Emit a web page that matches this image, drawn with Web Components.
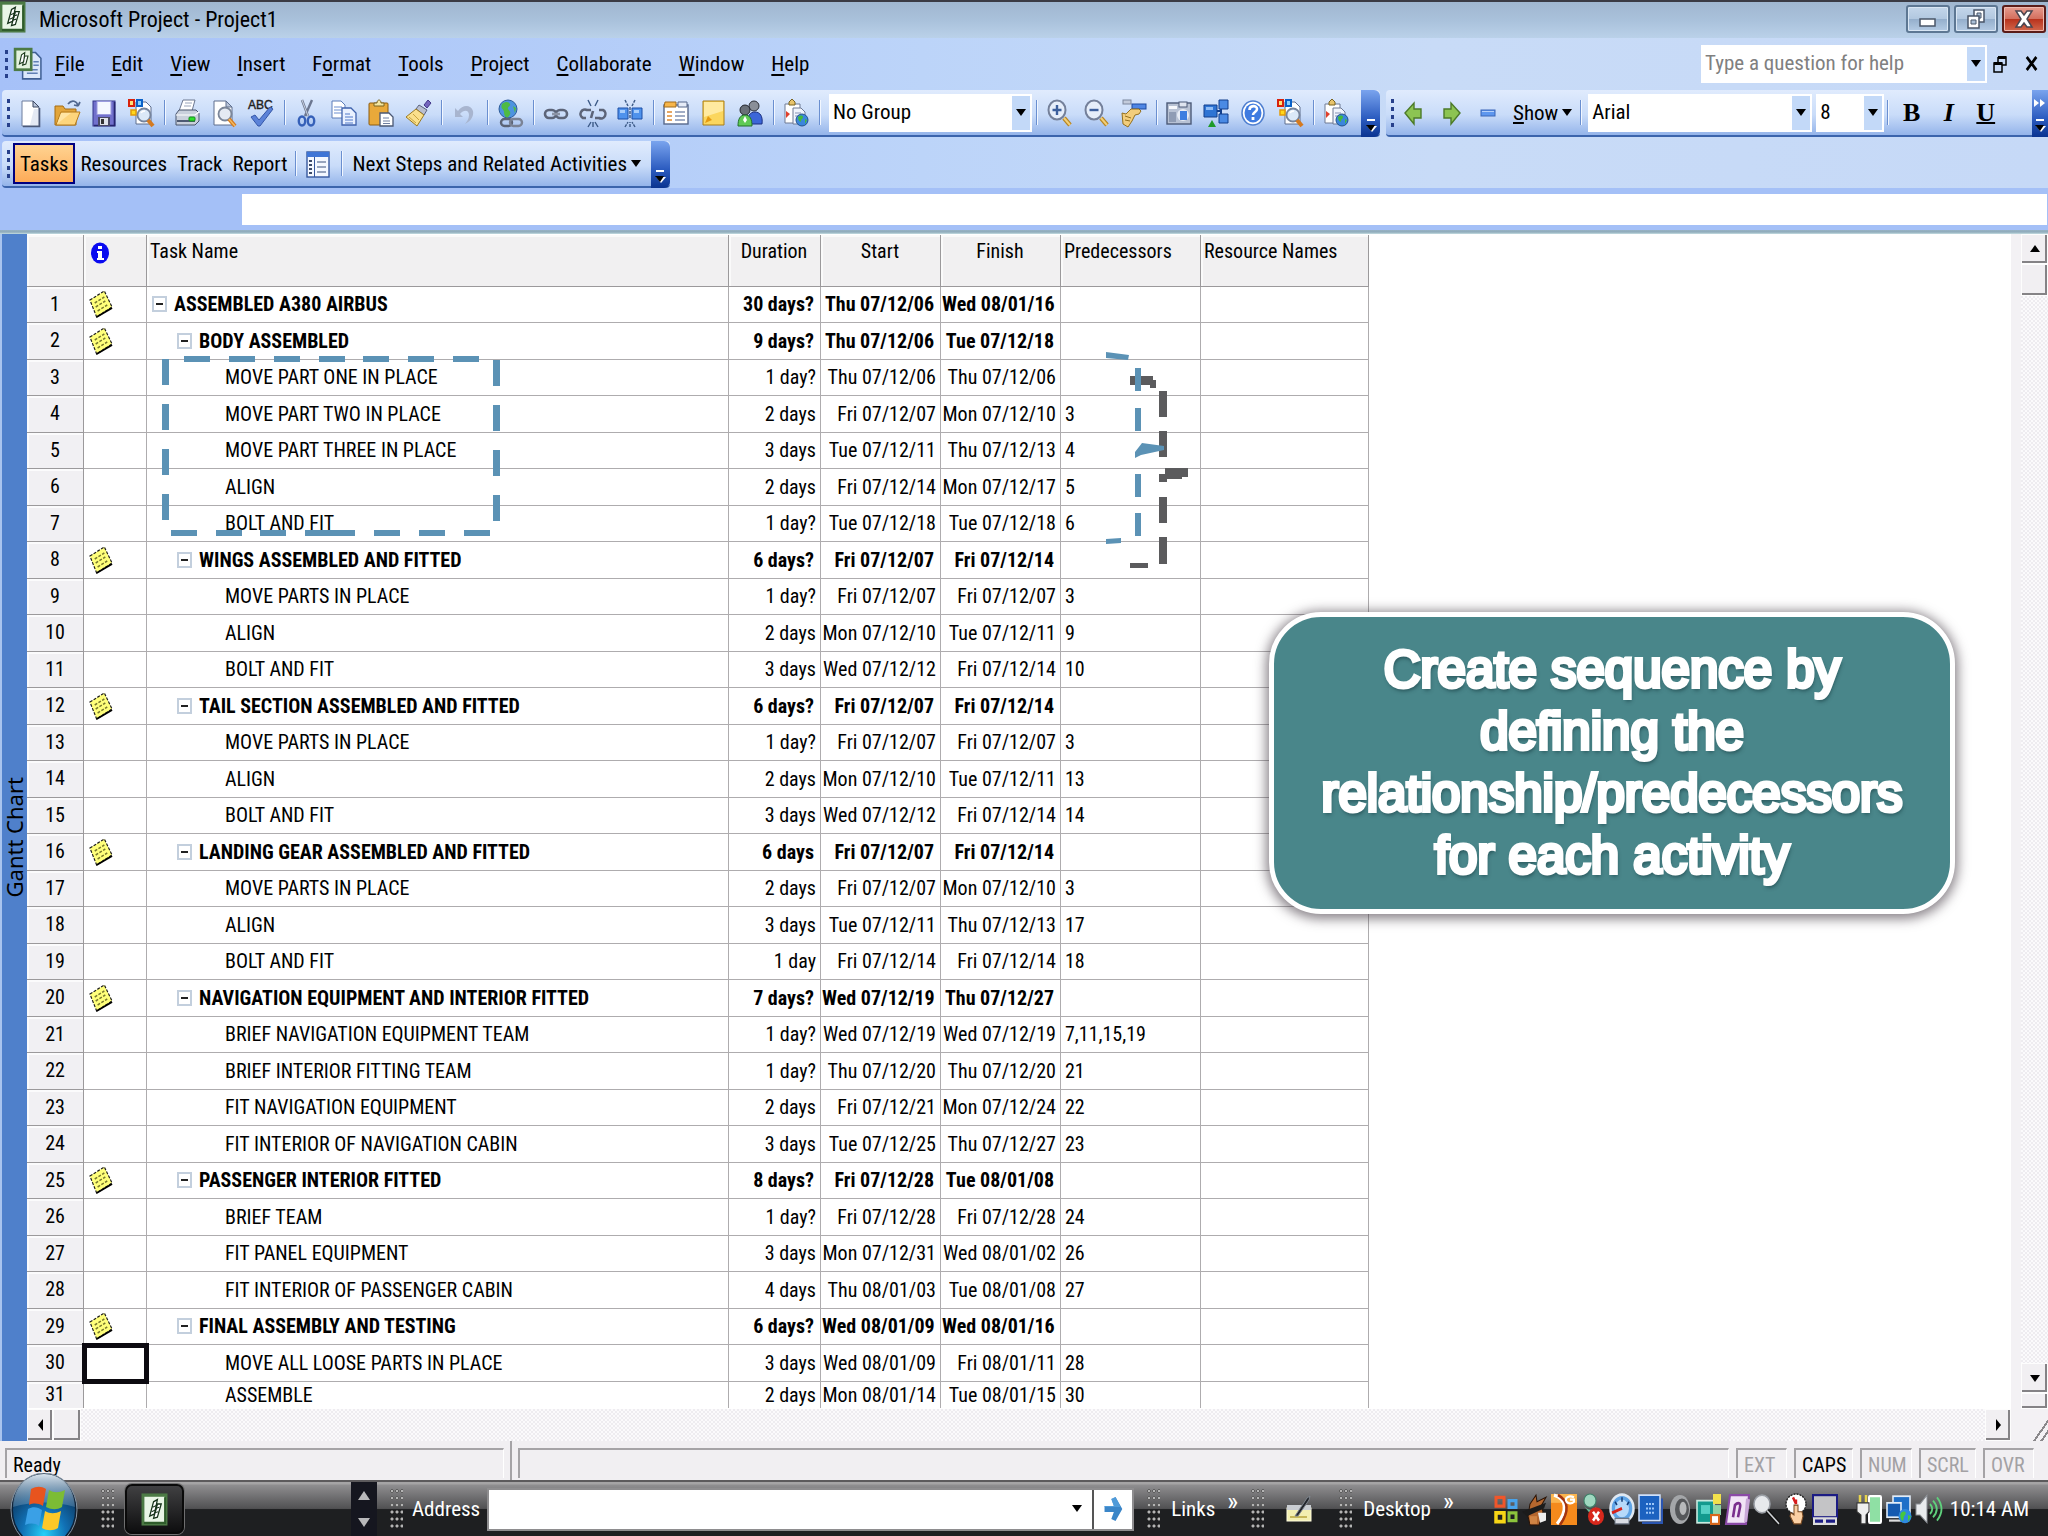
<!DOCTYPE html>
<html lang="en">
<head>
<meta charset="utf-8">
<title>Microsoft Project - Project1</title>
<style>
html,body{margin:0;height:100%}
body{font-family:"Roboto Condensed","Liberation Sans",sans-serif;font-size:21px;color:#000;overflow:hidden}
</style>
</head>
<body>
<project-window></project-window>
<script>
const ICONS = {
 app:`<rect x="1" y="1" width="24" height="26" fill="#e9f5e6" stroke="#4c7a45" stroke-width="3"/><path d="M2 26h22V3" fill="none" stroke="#2f5c2b" stroke-width="2"/><path d="M8 20l4-13 4-2-3 13zM12 22l4-13 4 0-4 12z" fill="#fff" stroke="#16321a" stroke-width="1.3"/><path d="M11 12l5-2M10 16l5-2M14 13l4-1M13 17l4-1" stroke="#16321a"/>`,
 doc:`<path d="M8 4h12l5 5v18H8z" fill="#dbe8fb" stroke="#3f5f94" stroke-width="1.4"/><path d="M12 19h10M12 22h10M18 12h5M18 15h5" stroke="#5f7fb5" stroke-width="1.3"/><rect x="1" y="1" width="15" height="18" fill="#e4f2df" stroke="#4c7a45" stroke-width="2.4"/><path d="M5 14l2-8 3-2-1 8zM8 15l2-8 3 0-2 7z" fill="#fff" stroke="#1c3a1c"/>`,
 new:`<path d="M5 2h11l6 6v19H5z" fill="#fff" stroke="#6c7c9c"/><path d="M16 2v6h6z" fill="#b9c5da" stroke="#3b4660"/><path d="M22.500 9v18.500H6" fill="none" stroke="#4a5878" stroke-width="1.6"/><path d="M17 10h4v16h-8z" fill="#d9e0ee" opacity=".7"/>`,
 open:`<path d="M1 26V7h8l2 3h11v16z" fill="#e2a53a" stroke="#a56d12"/><path d="M2 26L7 13h19l-5 13z" fill="#fdd57c" stroke="#b47a1c"/><path d="M3 25l4-11h10z" fill="#ffe9ac" opacity=".8"/><path d="M14 5c4-5 9-3 10 2m0 0l-4-1m4 1l2-4" fill="none" stroke="#50678f" stroke-width="1.7"/>`,
 save:`<rect x="2" y="2" width="22" height="25" fill="#7170cc" stroke="#34348a"/><path d="M23.500 3v23.500H3" fill="none" stroke="#26266f" stroke-width="1.600"/><rect x="6" y="2.500" width="14" height="13" fill="#f4f7ff" stroke="#9a9ade"/><rect x="7" y="18" width="12" height="9" fill="#4a4a66"/><rect x="9" y="19" width="8" height="7" fill="#dfe2ea"/><rect x="10" y="20" width="3" height="5" fill="#333"/>`,
 find:`<path d="M8 3h10l5 5v17H8z" fill="#fff" stroke="#5e6e8e"/><rect x="1" y="1" width="5" height="6" fill="#ffe27a" stroke="#d8220c" stroke-width="2"/><rect x="9" y="1" width="5" height="6" fill="#8ed0ff" stroke="#0b62c8" stroke-width="2"/><rect x="3" y="11" width="5" height="5" fill="#ffd81c" stroke="#e39b07" stroke-width="1.500"/><circle cx="16" cy="16" r="6.500" fill="#dbe9f8" stroke="#76849c" stroke-width="1.800"/><path d="M13 14c1-2 3-2 4-2" stroke="#fff" stroke-width="1.500" fill="none"/><path d="M20 21l5 6" stroke="#d47a20" stroke-width="4"/>`,
 print:`<path d="M9 1h12l-3 11H5z" fill="#fff" stroke="#6d7891"/><path d="M11 4h7M10 7h7" stroke="#9aa5bb"/><path d="M5 11h17l3 3v8l-4 4H2V15z" fill="#c9d0dc" stroke="#49546c"/><path d="M2 16h19l4-3" fill="none" stroke="#fff" stroke-width="1.200"/><path d="M3 22h18" stroke="#4e5a73" stroke-width="2"/><rect x="15" y="18" width="6" height="4" rx="1" fill="#2fe02c" stroke="#158a1c"/>`,
 preview:`<path d="M3 2h12l6 6v18H3z" fill="#fff" stroke="#5e6e8e"/><path d="M15 2v6h6z" fill="#b9c5da" stroke="#5e6e8e"/><circle cx="14" cy="15" r="6.500" fill="#e4eaf3" stroke="#7b8699" stroke-width="1.800"/><path d="M18 20l6 7" stroke="#d47a20" stroke-width="4"/><path d="M18 20l6 7" stroke="#f4bb62" stroke-width="1.400"/>`,
 abc:`<text x="0" y="10" font-family="Liberation Sans,sans-serif" font-size="12" fill="#222" stroke="#222" stroke-width=".4">ABC</text><path d="M3 18l4-2 4 5L22 8l3 2-13 17h-2z" fill="#5b82d8" stroke="#3557a8"/>`,
 cut:`<path d="M8 1l6 16M18 1l-7 16" stroke="#6c7790" stroke-width="2.400"/><path d="M8 1l6 16" stroke="#c8d0de"/><ellipse cx="8" cy="22" rx="3.200" ry="4.500" fill="none" stroke="#3560b8" stroke-width="2.400"/><ellipse cx="17" cy="22" rx="3.200" ry="4.500" fill="none" stroke="#3560b8" stroke-width="2.400"/>`,
 copy:`<path d="M1 2h9l4 4v13H1z" fill="#fff" stroke="#5c7cb8"/><path d="M3 8h8M3 11h8M3 14h8" stroke="#6d8fd0"/><path d="M11 9h9l5 5v12H11z" fill="#eaf1ff" stroke="#3f62ac" stroke-width="1.300"/><path d="M14 15h5M14 18h8M14 21h8M14 24h8" stroke="#5078c8"/>`,
 paste:`<rect x="1" y="4" width="19" height="22" rx="1" fill="#e9a93a" stroke="#8c5c10"/><path d="M6 7V4h3c0-4 4-4 4 0h3v3z" fill="#f4e6a2" stroke="#7a6420"/><path d="M12 14h9l4 4v9H12z" fill="#fff" stroke="#4b5874" stroke-width="1.300"/><path d="M15 19h6M15 22h7M15 24.500h7" stroke="#6f7fa0"/>`,
 brush:`<path d="M19 6l4-5 3 3-4 5z" fill="#7465bd" stroke="#44388a"/><path d="M14 6l8 5-3 5-8-6z" fill="#b9bfd0" stroke="#5c6480"/><path d="M11 10l8 6-7 11L1 18z" fill="#fae08c" stroke="#9c7a20"/><path d="M4 18l7 6M8 15l6 6" stroke="#c9a440"/>`,
 undo:`<path d="M4 9v9h8l-3-3c4-5 9-4 9 1 0 4-2 6-4 9 6-3 9-8 8-13C20 6 12 5 7 12z" fill="#a8b5cf"/>`,
 globelink:`<circle cx="11" cy="10" r="9" fill="#4d93e0" stroke="#2d5c9a"/><path d="M5 5c4-3 7-2 8 0s-3 3-2 5 4 3 1 7-5-1-5-4-4-3-2-8zM16 7l3 2-1 5z" fill="#4fbb43"/><rect x="4" y="20" width="11" height="7" rx="3.500" fill="none" stroke="#5b6375" stroke-width="2.400"/><rect x="13" y="20" width="12" height="7" rx="3.500" fill="none" stroke="#7b8395" stroke-width="2.400"/>`,
 link:`<rect x="2" y="11" width="11" height="8" rx="4" fill="none" stroke="#5c6478" stroke-width="2.600"/><rect x="13" y="11" width="11" height="8" rx="4" fill="none" stroke="#5c6478" stroke-width="2.600"/><path d="M9 15h8" stroke="#8c94a6" stroke-width="2.600"/>`,
 unlink:`<path d="M11 11H7a4 4 0 0 0-4 8h3M15 19h4a4 4 0 0 0 4-8h-4M11 19l2-7" fill="none" stroke="#5c6478" stroke-width="2.600"/><path d="M8 1l3 6M18 1l-3 6M8 28l3-5M13 28v-5M18 28l-3-5" stroke="#3c5a86" stroke-width="1.400"/>`,
 split:`<path d="M1 9h10v11H1zM15 9h10v11H15z" fill="#4f92ec" stroke="#1d4fa6"/><path d="M3 11h5v3H3zM17 11h5v3h-5z" fill="#a8cdfb"/><path d="M8 1l3 6M18 1l-3 6M8 28l3-5M13 28v-5M18 28l-3-5M13 8v12" stroke="#3c5a86" stroke-width="1.400" stroke-dasharray="3 1"/>`,
 info:`<rect x="1" y="6" width="24" height="19" fill="#fff" stroke="#57688c" stroke-width="1.400"/><path d="M1 8h12V3H2z" fill="#f7b549" stroke="#a06a1c"/><path d="M15 3h9v5h-9z" fill="#e6ecf8" stroke="#57688c"/><path d="M4 13h5M4 17h5M4 21h5" stroke="#e08a30" stroke-width="1.500"/><path d="M12 13h10M12 17h10M12 21h10" stroke="#8292b4" stroke-width="1.500"/>`,
 note:`<path d="M3 2h21v24H3z" fill="#fbd65e" stroke="#a87c16"/><path d="M4 3h19v9L4 18z" fill="#ffeaa0"/><path d="M5 24l3-7 4 4z" fill="#e59a10"/>`,
 people:`<circle cx="17" cy="7" r="5" fill="#8a8f98" stroke="#2d3038"/><path d="M11 25c-1-8 2-12 7-12s8 4 7 12z" fill="#3c66d8" stroke="#1b2f80"/><circle cx="8" cy="11" r="5" fill="#6a7078" stroke="#22252c"/><path d="M1 27c0-7 2-11 7-11s7 4 7 11z" fill="#5fca55" stroke="#22702a"/><path d="M8 17l-2 4 2 3 2-3z" fill="#fff"/>`,
 clip:`<path d="M2 5h15v19H2z" fill="#fff" stroke="#6e7a94"/><path d="M6 6V3l3-3 3 3v3z" fill="#e8c46c" stroke="#7a6420"/><path d="M3 12l4 3-4 4" fill="#e0402c"/><path d="M10 9h8l4 4v12H10z" fill="#f1f5fd" stroke="#6e7a94"/><path d="M12 14h6M12 17h6" stroke="#8593b3"/><circle cx="19" cy="21" r="6" fill="#3b86dc" stroke="#23538e"/><path d="M15 18c2-2 5-2 5 0s-2 2-2 4-3 0-3-4zM22 20l2 1-2 4z" fill="#44b93c"/>`,
 zoomin:`<ellipse cx="11" cy="11" rx="8.500" ry="9.500" fill="#e6eefa" stroke="#74809a" stroke-width="2"/><path d="M11 6v10M6.500 11h9" stroke="#3c5f9c" stroke-width="2.400"/><path d="M18 19l6 7" stroke="#b98520" stroke-width="4.500"/><path d="M18 19l6 7" stroke="#f1cf78" stroke-width="2"/>`,
 zoomout:`<ellipse cx="11" cy="11" rx="8.500" ry="9.500" fill="#e6eefa" stroke="#74809a" stroke-width="2"/><path d="M6.500 11h9" stroke="#3c5f9c" stroke-width="2.400"/><path d="M18 19l6 7" stroke="#b98520" stroke-width="4.500"/><path d="M18 19l6 7" stroke="#f1cf78" stroke-width="2"/>`,
 goto:`<rect x="3" y="1" width="8" height="4" fill="#c3cbdb" stroke="#7c879e"/><rect x="12" y="5" width="14" height="5" fill="#4f86e4" stroke="#1f4aa0"/><path d="M2 14l4 1 5-5 8 0 2 2-2 3-4 1-3 6-4 6-5-3z" fill="#f2cd7c" stroke="#94701e"/><path d="M5 17l6 2M5 21l5 1" stroke="#94701e"/>`,
 camera:`<rect x="1" y="4" width="24" height="21" fill="#b8c2d4" stroke="#4c5a78" stroke-width="1.400"/><path d="M3 7h8v3H3z" fill="#f6f8fc"/><rect x="13" y="3" width="8" height="5" fill="#dfe5f0" stroke="#4c5a78"/><circle cx="17" cy="16" r="6" fill="#e7ecf5"/><rect x="14" y="12" width="7" height="9" fill="#3d7ee0"/><path d="M3 13h7v10H3z" fill="#8f9cb4"/>`,
 net:`<path d="M1 6h13v12H1z" fill="#2e74d4" stroke="#123f8c"/><path d="M14 12h4M18 6v15" stroke="#123f8c" stroke-width="2"/><path d="M16 1h9v9h-9zM16 15h9v9h-9z" fill="#4a8ae4" stroke="#123f8c"/><path d="M3 8h7v3H3z" fill="#8fbcf6"/><path d="M5 28l4-7 4 7z" fill="#1f9a28"/>`,
 help:`<ellipse cx="13" cy="14" rx="11" ry="12" fill="#fff" stroke="#4f7fd0" stroke-width="1.500"/><ellipse cx="13" cy="14" rx="8.500" ry="9.500" fill="#3f7be0"/><path d="M9.500 11c0-5 7.500-5 7.500-1 0 3-4 3-4 6" fill="none" stroke="#fff" stroke-width="2.600"/><rect x="11.600" y="18" width="2.800" height="3" fill="#fff"/>`,
 left:`<path d="M4 14L13 4v6h7v9h-7v6z" fill="#8cc452" stroke="#4c7a28" stroke-width="1.400"/>`,
 right:`<path d="M22 14L13 4v6H6v9h7v6z" fill="#8cc452" stroke="#4c7a28" stroke-width="1.400"/>`,
 minus:`<rect x="6" y="11" width="14" height="6" fill="#5e97ee" stroke="#3a66b8"/><path d="M7 12.500h12" stroke="#b4d0fa"/>`,
 guide:`<rect x="2" y="2" width="22" height="25" fill="#f4f8ff" stroke="#36589e" stroke-width="1.400"/><rect x="2" y="2" width="22" height="5" fill="#3f75d6"/><path d="M9.500 7v20" stroke="#36589e"/><path d="M4 11h3M4 15h3M4 19h3M4 23h3" stroke="#3c4a68" stroke-width="2"/><path d="M12 12h9M12 17h9M12 22h9" stroke="#7888a8" stroke-width="1.600"/>`,
 sticky:`<path d="M2 10L17 1l8 16L9 27z" fill="#ffff7a" stroke="#1a1a1a" stroke-width="1.200" stroke-dasharray="3 1.500"/><path d="M9 27l16-9" stroke="#000" stroke-width="2"/><path d="M7 13l10-6M8 17l10-6M10 21l10-6" stroke="#77772c" stroke-width="1.500" stroke-dasharray="3 1.500"/>`,
 ind:`<ellipse cx="13" cy="14" rx="9" ry="10.500" fill="#0a0af0"/><path d="M11 7h4v3h-4zM10 12h5v7h2v2h-7v-2h1v-5h-1z" fill="#fff"/>`,
 office:`<path d="M3 3h8v8H3z" fill="none" stroke="#f0562a" stroke-width="3"/><path d="M16 6h7v6h-7z" fill="none" stroke="#4aa3ea" stroke-width="3"/><path d="M3 17h8v8H3z" fill="none" stroke="#f7d516" stroke-width="3.500"/><path d="M16 17h7v7h-7z" fill="none" stroke="#8cc43c" stroke-width="3"/>`,
 fox:`<path d="M8 9l6-8 1 6 9-4-5 8 2 5-4 12H8l-2-8z" fill="#b5672e" stroke="#2a1408"/><path d="M0 16l24-8-2 5-17 7z" fill="#1b1b1b"/><path d="M16 17h8v7l-6 2z" fill="#eee"/><path d="M8 20h7v7H8z" fill="#d08444"/>`,
 orange:`<rect x="0" y="0" width="26" height="28" fill="#f58a1c"/><path d="M0 0h26v8H0z" fill="#fbb44e"/><path d="M3 1c12 3 14 14 3 26" fill="none" stroke="#fff" stroke-width="3"/><path d="M7 1c10 5 12 14 2 27" fill="none" stroke="#a33410" stroke-width="2.500"/><path d="M23 3c-5-2-9 0-8 3s6 3 8 1V5h-4" fill="none" stroke="#fff" stroke-width="2"/>`,
 person:`<circle cx="10" cy="6" r="6" fill="#9fd8c0" stroke="#3c8068"/><path d="M3 10c5 6 10 4 13 2l-2 10z" fill="#6ab898"/><circle cx="16" cy="20" r="8" fill="#d8281c"/><path d="M13 16l6 8M19 16l-6 8" stroke="#fff" stroke-width="2.500"/>`,
 gauge:`<ellipse cx="13" cy="13" rx="11.500" ry="12.500" fill="#5fa4e6" stroke="#dfe8f2" stroke-width="2.500"/><ellipse cx="13" cy="13" rx="7" ry="8" fill="#b6dafa"/><path d="M3 17l10-4" stroke="#d8231a" stroke-width="2.600"/><path d="M6 22h14v5H6z" fill="#d9dde4" stroke="#6c7684"/><path d="M13 3v4M6 7l2 3M20 7l-2 3" stroke="#123c78" stroke-width="1.500"/>`,
 chip:`<path d="M1 1h21v23H1z" fill="#1c62c0" stroke="#cfe0fa" stroke-width="1.500"/><path d="M23 4h2v23H4v-2h19z" fill="#2a55b0"/><path d="M8 9h8M8 13h8M8 17h8" stroke="#9cc6f8" stroke-width="1.800" stroke-dasharray="2 1"/>`,
 horn:`<ellipse cx="13" cy="14" rx="10" ry="13" fill="#a4a6a9"/><ellipse cx="15" cy="14" rx="7" ry="10" fill="#55575a"/><ellipse cx="16" cy="13" rx="3.500" ry="6" fill="#b7b9bb"/>`,
 shots:`<rect x="1" y="6" width="17" height="20" fill="#139a8e" stroke="#c9eae0" stroke-width="1.600"/><path d="M5 10h9v8H5z" fill="#54d0c4"/><rect x="17" y="0" width="8" height="9" fill="#f2e14c"/><rect x="17" y="10" width="8" height="9" fill="#8fd4a8"/><rect x="15" y="19" width="8" height="8" fill="#fff" stroke="#d8681c" stroke-width="2"/>`,
 onenote:`<path d="M5 1h19l-3 26H1z" fill="#f1e4f6" stroke="#8a4aa6" stroke-width="2"/><path d="M8 21l2-11c3-3 6-2 5 2l-2 9" fill="none" stroke="#7a2f8e" stroke-width="2.600"/><path d="M21 4l4 1-3 20-3 1z" fill="#c9a8d8"/>`,
 mag:`<ellipse cx="8" cy="9" rx="8" ry="8" fill="#e7e9ec" stroke="#9b9fa6" stroke-width="1.500"/><path d="M13 15l12 12" stroke="#111" stroke-width="4"/><path d="M13 15l12 12" stroke="#cfd2d6" stroke-width="1.400"/>`,
 clock:`<ellipse cx="13" cy="9" rx="10" ry="9" fill="#fff" stroke="#222" stroke-width="1.300" stroke-dasharray="2 1"/><path d="M13 9L10 3M13 9V5" stroke="#d81c1c" stroke-width="2.400"/><path d="M11 10h4v6h4l1 4-2 7h-7l-4-7 1-3 3 2z" fill="#fbd0a4" stroke="#7a4a22"/>`,
 panel:`<rect x="1" y="1" width="24" height="20" fill="#c4c4c6" stroke="#1c1c84" stroke-width="2"/><path d="M1 21h24v7H1z" fill="#dcdcdc"/><path d="M3 23h8v3H3zM14 23h9v3h-9z" fill="#1c1c84"/>`,
 plug:`<rect x="12" y="2" width="12" height="24" rx="1" fill="#8fe0a4" stroke="#fff" stroke-width="2"/><path d="M3 1v7M9 1v7" stroke="#e8d44c" stroke-width="2.500"/><path d="M0 8h12v8l-3 3v8H4v-8l-4-3z" fill="#eee" stroke="#333"/>`,
 lan:`<rect x="7" y="2" width="17" height="15" fill="#1f6fc8" stroke="#e2ecf8" stroke-width="1.600"/><rect x="1" y="8" width="14" height="13" fill="#155ab0" stroke="#e2ecf8" stroke-width="1.600"/><path d="M3 24h12" stroke="#ddd" stroke-width="2"/><circle cx="19" cy="20" r="6.500" fill="#2e8ae0"/><path d="M15 17c4-3 6 0 4 2s-1 4-2 5-4-3-2-7zM22 19l3 1-3 5z" fill="#46c83e"/>`,
 sound:`<path d="M1 9h4l7-8v25l-7-7H1z" fill="#e9ebee" stroke="#8a8e94"/><path d="M15 9c3 3 3 6 0 9M18 6c5 5 5 10 0 15M22 3c6 7 6 14 0 21" fill="none" stroke="#5fd07c" stroke-width="1.800"/>`,
 pen:`<rect x="1" y="13" width="24" height="13" fill="#f3efb0" stroke="#fffde0"/><rect x="1" y="10" width="24" height="5" fill="#c9cdd2"/><path d="M4 22h17" stroke="#b9a63c" stroke-width="1.500"/><path d="M9 21L21 3l3-2-1 4L12 21z" fill="#23262b" stroke="#7f868f"/>`,
 go:`<path d="M3 11h11L11 4l5-2 8 12-8 12-5-2 3-7H3z" fill="#3b86c8"/><path d="M3 11h11L11 4l5-2 6 10H3z" fill="#5aa4e0" opacity=".7"/>`
};
class Base extends HTMLElement{
  connectedCallback(){ if(!this.shadowRoot){ this.attachShadow({mode:'open'}).innerHTML=this.view(); } }
}
const define=(n,c)=>customElements.define(n,c);
const DOWN='<svg width="10" height="8" viewBox="0 0 10 8"><path d="M0 0h10L5 7z" fill="currentColor"/></svg>';

define('app-icon',class extends Base{view(){
  return `<style>:host{display:inline-block;width:26px;height:28px}svg{display:block;width:100%;height:100%;overflow:visible}</style><svg viewBox="0 0 26 28" preserveAspectRatio="none" aria-hidden="true">${ICONS[this.getAttribute('name')]}</svg>`}});

define('tool-button',class extends Base{view(){
  const icon=this.getAttribute('icon');
  return `<style>:host{display:flex;flex:none}button{all:unset;display:flex;align-items:center;justify-content:center;gap:4px;box-sizing:border-box;height:100%;min-width:37px;line-height:28px;white-space:nowrap}
  :host([text]) button{min-width:0;padding:0 5px}
  :host([pressed]) button{background:linear-gradient(#ffd391,#fdab58);border:2px solid #000080}
  ::slotted(u){text-decoration-thickness:2px}</style>
  <button type="button" aria-label="${this.getAttribute('label')||this.textContent.trim()}">${icon?`<app-icon name="${icon}"></app-icon>`:''}<span><slot></slot></span>${this.hasAttribute('menu')?DOWN:''}</button>`}});

define('tool-separator',class extends Base{view(){
  return `<style>:host{flex:none;display:block;width:1px;margin:10px 4px 10px 3px;background:#6a8fd0;border-right:1px solid #f2f7ff}</style>`}});

define('drag-grip',class extends Base{view(){
  return `<style>:host{flex:none;display:block;width:3px;height:28px;margin:0 3px;align-self:center;background:repeating-linear-gradient(#27408b 0 4px,transparent 4px 8px)}</style>`}});

define('combo-box',class extends Base{view(){
  const ph=this.getAttribute('placeholder'),l=this.getAttribute('label');
  const f=ph?`<input type="text" aria-label="${l}" placeholder="${ph}">`:`<select aria-label="${l}"><option>${this.getAttribute('value')}</option></select>`;
  return `<style>:host{display:flex;flex:none;align-self:center;box-sizing:border-box;height:38px;background:#fff;border:2px solid #fff}
  input,select{appearance:none;border:0;outline:0;background:none;flex:1;min-width:0;padding:0 2px;margin:0 0 2px;font:inherit;color:#000}
  input::placeholder{color:#808080;opacity:1}
  span{flex:none;display:flex;align-items:center;justify-content:center;width:18px;background:#c3d9f8}</style>${f}<span>${DOWN}</span>`}});

define('tool-bar',class extends Base{view(){
  return `<style>:host{display:flex;box-sizing:border-box;height:47px;border-bottom:2px solid #3b64ac;border-radius:4px;background:linear-gradient(#e0ebfd,#c9dcf9 55%,#94b4ea);padding-left:2px}
  .cap{flex:none;width:19px;margin-left:5px;margin-bottom:-2px;border-radius:0 6px 6px 0;background:linear-gradient(#7aa4ee,#2c5cc0 60%,#0a3390);display:flex;flex-direction:column;align-items:center;justify-content:flex-end;gap:12px;padding-bottom:4px;box-sizing:border-box}
  :host([grow]){flex:1}:host([grow]) .cap{margin-left:auto;border-radius:0;width:16px}</style>
  <drag-grip></drag-grip><slot></slot>
  <div class="cap">${this.hasAttribute('grow')?'<svg width="12" height="8" viewBox="0 0 12 8"><path d="M0 0l5 4-5 4zM6 0l5 4-5 4z" fill="#fff"/></svg>':''}<svg width="14" height="14" viewBox="0 0 14 14"><path d="M3 1h8" stroke="#fff" stroke-width="2"/><path d="M3 7h10l-5 6z" fill="#fff"/><path d="M2 6h9L7 12z" fill="#000"/></svg></div>`}});

define('title-bar',class extends Base{view(){
  return `<style>:host{display:flex;align-items:center;height:36px;border-top:2px solid #3b3b44;background:linear-gradient(#a0b7d0,#a9c1db 50%,#bad1e9)}
  app-icon{width:25px;height:30px;margin-bottom:6px}h1{margin:0 auto 0 14px;font-size:22px;font-weight:400;line-height:30px}
  button{all:unset;box-sizing:border-box;width:44px;height:28px;margin-left:4px;border:2px solid #5d7793;border-radius:3px;display:flex;align-items:center;justify-content:center;background:linear-gradient(#c4d6ea,#b2c8e0 48%,#94aecb 50%,#b4cbe4);box-shadow:inset 0 0 0 1px #d9e6f4;margin-bottom:2px}
  .x{background:linear-gradient(#e79c8f,#d4705f 48%,#b8321c 50%,#d2674c);border-color:#5a1c18;box-shadow:inset 0 0 0 1px #f0b9ae;margin-right:2px}</style>
  <app-icon name="app"></app-icon><h1>Microsoft Project - Project1</h1>
  <button type="button" aria-label="Minimize"><svg width="18" height="20"><rect x="1" y="10" width="15" height="7" fill="#fff" stroke="#4a5668" stroke-width="1.500"/></svg></button>
  <button type="button" aria-label="Restore"><svg width="20" height="22"><path d="M8 2h10v12H8z" fill="#fff" stroke="#4a5668" stroke-width="1.500"/><path d="M11 5h4v5h-4z" fill="#a9bfd6" stroke="#4a5668"/><path d="M2 8h11v12H2z" fill="#fff" stroke="#4a5668" stroke-width="1.500"/><path d="M5 12h5v4H5z" fill="#a9bfd6" stroke="#4a5668"/></svg></button>
  <button type="button" class="x" aria-label="Close"><svg width="20" height="20"><path d="M2 2h5l3 4 3-4h5l-5 8 5 8h-5l-3-4-3 4H2l5-8z" fill="#fff" stroke="#4c4650" stroke-width="1.500"/></svg></button>`}});

define('menu-bar',class extends Base{view(){
  const items=['|File','|Edit','|View','|Insert','F|ormat','|Tools','|Project','|Collaborate','|Window','|Help'];
  return `<style>:host{display:flex;align-items:center;height:52px;padding-left:2px}
  nav{display:flex;gap:1px;margin-right:auto}button{all:unset;padding:0 13px;line-height:32px}u{text-decoration-thickness:2px;text-underline-offset:3px}
  app-icon{width:28px;height:32px;margin-left:3px}combo-box{width:286px}.w{padding:0 8px 0 6px;display:flex}.w:last-child{padding:0 9px 0 10px}</style>
  <drag-grip></drag-grip><app-icon name="doc"></app-icon>
  <nav>${items.map(i=>{const p=i.indexOf('|');return `<button type="button">${i.slice(0,p)}<u>${i[p+1]}</u>${i.slice(p+2)}</button>`}).join('')}</nav>
  <combo-box label="Help search" placeholder="Type a question for help"></combo-box>
  <button type="button" class="w" aria-label="Restore document"><svg width="14" height="18" viewBox="0 0 14 18"><path d="M5 2h8v8H9M5 2v5M1 8h8v9H1z" fill="none" stroke="#000" stroke-width="1.500"/><path d="M5 2.500h8M1 8.500h8" stroke="#000" stroke-width="3"/></svg></button>
  <button type="button" class="w" aria-label="Close document"><svg width="14" height="16" viewBox="0 0 16 16" preserveAspectRatio="none"><path d="M2 1l11 13M13 1L2 14" stroke="#000" stroke-width="3"/></svg></button>`}});

const ROWS=[
[0,'ASSEMBLED A380 AIRBUS','30 days?','Thu 07/12/06','Wed 08/01/16',''],
[1,'BODY ASSEMBLED','9 days?','Thu 07/12/06','Tue 07/12/18',''],
[2,'MOVE PART ONE IN PLACE','1 day?','Thu 07/12/06','Thu 07/12/06',''],
[2,'MOVE PART TWO IN PLACE','2 days','Fri 07/12/07','Mon 07/12/10','3'],
[2,'MOVE PART THREE IN PLACE','3 days','Tue 07/12/11','Thu 07/12/13','4'],
[2,'ALIGN','2 days','Fri 07/12/14','Mon 07/12/17','5'],
[2,'BOLT AND FIT','1 day?','Tue 07/12/18','Tue 07/12/18','6'],
[1,'WINGS ASSEMBLED AND FITTED','6 days?','Fri 07/12/07','Fri 07/12/14',''],
[2,'MOVE PARTS IN PLACE','1 day?','Fri 07/12/07','Fri 07/12/07','3'],
[2,'ALIGN','2 days','Mon 07/12/10','Tue 07/12/11','9'],
[2,'BOLT AND FIT','3 days','Wed 07/12/12','Fri 07/12/14','10'],
[1,'TAIL SECTION ASSEMBLED AND FITTED','6 days?','Fri 07/12/07','Fri 07/12/14',''],
[2,'MOVE PARTS IN PLACE','1 day?','Fri 07/12/07','Fri 07/12/07','3'],
[2,'ALIGN','2 days','Mon 07/12/10','Tue 07/12/11','13'],
[2,'BOLT AND FIT','3 days','Wed 07/12/12','Fri 07/12/14','14'],
[1,'LANDING GEAR ASSEMBLED AND FITTED','6 days','Fri 07/12/07','Fri 07/12/14',''],
[2,'MOVE PARTS IN PLACE','2 days','Fri 07/12/07','Mon 07/12/10','3'],
[2,'ALIGN','3 days','Tue 07/12/11','Thu 07/12/13','17'],
[2,'BOLT AND FIT','1 day','Fri 07/12/14','Fri 07/12/14','18'],
[1,'NAVIGATION EQUIPMENT AND INTERIOR FITTED','7 days?','Wed 07/12/19','Thu 07/12/27',''],
[2,'BRIEF NAVIGATION EQUIPMENT TEAM','1 day?','Wed 07/12/19','Wed 07/12/19','7,11,15,19'],
[2,'BRIEF INTERIOR FITTING TEAM','1 day?','Thu 07/12/20','Thu 07/12/20','21'],
[2,'FIT NAVIGATION EQUIPMENT','2 days','Fri 07/12/21','Mon 07/12/24','22'],
[2,'FIT INTERIOR OF NAVIGATION CABIN','3 days','Tue 07/12/25','Thu 07/12/27','23'],
[1,'PASSENGER INTERIOR FITTED','8 days?','Fri 07/12/28','Tue 08/01/08',''],
[2,'BRIEF TEAM','1 day?','Fri 07/12/28','Fri 07/12/28','24'],
[2,'FIT PANEL EQUIPMENT','3 days','Mon 07/12/31','Wed 08/01/02','26'],
[2,'FIT INTERIOR OF PASSENGER CABIN','4 days','Thu 08/01/03','Tue 08/01/08','27'],
[1,'FINAL ASSEMBLY AND TESTING','6 days?','Wed 08/01/09','Wed 08/01/16',''],
[2,'MOVE ALL LOOSE PARTS IN PLACE','3 days','Wed 08/01/09','Fri 08/01/11','28'],
[2,'ASSEMBLE','2 days','Mon 08/01/14','Tue 08/01/15','30']];

define('task-table',class extends Base{view(){
  const cols=[57,63,582,92,120,120,140,168];
  return `<style>:host{display:block}
  table{width:1342px;table-layout:fixed;border-collapse:separate;border-spacing:0;font-size:20px;line-height:24px}
  th,td{box-sizing:border-box;padding:0 4px;border:solid #aeacae;border-width:0 1px 1px 0;white-space:nowrap;overflow:hidden;text-align:left;vertical-align:middle}
  thead th{height:52px;vertical-align:top;padding-top:4px;padding-left:3px;font-weight:400;background:#f1f0f1;border-color:#9b999b;box-shadow:inset 2px 2px #fafafa}
  thead th.c{text-align:center}
  tbody tr{height:37px}tbody tr:nth-child(odd){height:36px}
  tbody th{font-weight:400;text-align:center;background:#f1f0f3;border-color:#9b999b;box-shadow:inset 2px 2px #fbfbfc;padding-bottom:2px}
  td{padding-bottom:1px}
  td.r{text-align:right;padding:0 4px 1px 1px}tr.s td{font-weight:700}tr.s td.r{padding-right:6px}
  td app-icon{display:block;width:25px}
  .n0{padding-left:5px}.n1{padding-left:30px}.n2{padding-left:78px}
  .n{display:flex;align-items:center;gap:7px}
  button{all:unset;box-sizing:border-box;width:15px;height:16px;border:2px solid #c3cfdd;background:#fff linear-gradient(#222,#222) center/7px 2px no-repeat}
  .sel{outline:5px solid #0c0a10;outline-offset:-3px;overflow:visible;position:relative}
  tbody tr:last-child{height:26px}tbody tr:last-child>*{border-bottom:0}</style>
  <table><colgroup>${cols.map(w=>`<col style="width:${w}px">`).join('')}</colgroup>
  <thead><tr><th></th><th class="i"><app-icon name="ind"></app-icon></th><th>Task Name</th><th class="c">Duration</th><th class="c">Start</th><th class="c">Finish</th><th>Predecessors</th><th>Resource Names</th></tr></thead>
  <tbody>${ROWS.map((r,i)=>`<tr class="${r[0]<2?'s':''}"><th scope="row">${i+1}</th><td class="${i==29?'sel':''}">${r[0]<2?'<app-icon name="sticky"></app-icon>':''}</td><td class="n${r[0]}"><div class="n">${r[0]<2?'<button type="button" aria-label="Collapse"></button>':''}<span>${r[1]}</span></div></td><td class="r">${r[2]}</td><td class="r">${r[3]}</td><td class="r">${r[4]}</td><td>${r[5]}</td><td></td></tr>`).join('')}</tbody></table>`}});

define('scroll-bar',class extends Base{view(){
  const v=this.hasAttribute('vertical');
  const b=(p,l)=>`<button type="button" aria-label="${l}"><svg width="12" height="12" viewBox="0 0 12 12"><path d="${p}" fill="#000"/></svg></button>`;
  return `<style>:host{display:flex;background:repeating-conic-gradient(#eeecf0 0 25%,#fbfafc 0 50%) 0 0/4px 4px}
  :host([vertical]){flex-direction:column;width:27px}:host(:not([vertical])){height:32px}
  button,i{all:unset;flex:none;box-sizing:border-box;display:flex;align-items:center;justify-content:center;background:#f1eff2;border:solid #fdfdfd;border-width:1px;box-shadow:inset -2px -2px #858386}
  button{width:26px;height:32px}i{width:28px;height:32px}
  :host([vertical]) button{width:27px;height:30px}:host([vertical]) i{width:27px;height:32px}
  .g{flex:1}:host([vertical]) i.last{height:16px}</style>
  ${v?b('M6 2l5 7H1z','Scroll up'):b('M9 0v12L4 6z','Scroll left')}<i></i><div class="g"></div>${v?b('M1 3h10L6 10z','Scroll down')+'<i class="last"></i>':b('M4 0v12l5-6z','Scroll right')}`}});

define('call-out',class extends Base{view(){
  return `<style>:host{position:absolute;left:1269px;top:378px;box-sizing:border-box;width:686px;height:302px;padding:22px 0;border:5px solid #fff;border-radius:52px;background:#49868a;box-shadow:0 2px 12px 3px rgba(60,50,60,.6);text-align:center;color:#fff;font:51px/62px "Liberation Sans",sans-serif;-webkit-text-stroke:4px #fff;text-shadow:1px 3px 4px rgba(10,40,45,.7)}p{margin:0}</style><p><slot></slot></p>`}});

define('sketch-marks',class extends Base{view(){
  const r=(x,y,w,h)=>`M${x} ${y}h${w}v${h}h${-w}z`;let b='',g='';
  for(const y of [359,404,449,494])b+=r(162,y,7,26)+r(493,y+1,7,26);
  for(const x of [184,229,274,319,363,408,453])b+=r(x,356,26,6);
  for(const x of [171,216,260,374,419,464])b+=r(x,530,26,6);
  b+=r(305,530,50,6);
  for(const [y,h] of [[408,23],[474,23],[513,23]])b+=r(1135,y,6,h);
  for(const [y,h] of [[391,26],[431,26],[497,26],[537,27]])g+=r(1159,y,8,h);
  return `<style>:host{position:absolute;inset:0;pointer-events:none}svg{display:block;width:1300px;height:600px;margin-top:-234px}</style>
  <svg viewBox="0 0 1300 600" aria-hidden="true"><path fill="#5b5b5d" d="${g}M1130 376h23v4h3v8h-6v-3h-20zM1165 468h23v9h-6v2h-15v3h-8v-8h6zM1130 563h18v5h-18z"/><path fill="#5b92b5" d="${b}M1135 368h6v23h-6zM1106 352l23 3-1 5-22-2zM1135 452l7-9 22 3v4l-23 5-6 3zM1106 539l15-1v5l-15 1z"/></svg>`}});

define('task-sheet',class extends Base{view(){
  return `<style>:host{display:flex;flex:1;min-height:0;position:relative;background:#f3f1f4}
  aside{flex:none;width:27px;box-sizing:border-box;border-left:2px solid #a9c4ee;background:#4f80cb;display:flex;align-items:center;justify-content:center}
  aside span{writing-mode:vertical-rl;transform:rotate(180deg);font:22px/25px "Noto Sans",sans-serif}
  .main{flex:1;min-width:0;display:flex;flex-direction:column}.body{flex:1;min-height:0;overflow:hidden;background:#fff;padding-top:1px}
  .side{display:flex;flex-direction:column;margin-left:10px}.side scroll-bar{flex:1}
  .grip{height:32px;background:repeating-linear-gradient(125deg,#f3f1f4 0 4px,#8a888b 4px 6px);clip-path:polygon(100% 20%,100% 100%,35% 100%)}</style>
  <aside><span>Gantt Chart</span></aside>
  <div class="main"><div class="body"><task-table></task-table></div><scroll-bar></scroll-bar></div>
  <div class="side"><scroll-bar vertical></scroll-bar><div class="grip"></div></div>
  <sketch-marks></sketch-marks>
  <call-out>Create sequence by<br>defining the<br>relationship/predecessors<br>for each activity</call-out>`}});

define('status-bar',class extends Base{view(){
  return `<style>:host{display:flex;height:39px;box-sizing:border-box;padding:7px 14px 2px 5px;gap:7px;background:#f1eff2;font-size:20px;line-height:30px}
  div{box-sizing:border-box;border:solid;border-width:2px 1px 0 2px;border-color:#a5a3a6 #fff #fff #a5a3a6;padding:0 6px;color:#a3a1a4}
  .on{color:#000}.a{width:499px}.b{flex:1}.v{width:2px;padding:0;border-width:0 0 0 2px;margin:-7px -1px -2px}</style>
  <div class="a on">Ready</div><div class="v"></div><div class="b"></div>
  ${[['EXT',51],['CAPS',59],['NUM',52],['SCRL',57],['OVR',51]].map(([t,w])=>`<div class="${t=='CAPS'?'on':''}" style="width:${w}px">${t}</div>`).join('')}`}});

define('task-bar',class extends Base{view(){
  const tray=['office','fox','orange','person','gauge','chip','horn','shots','onenote','mag','clock','panel'];
  return `<style>:host{display:flex;position:relative;height:56px;box-sizing:border-box;border-top:2px solid #5c5a5c;background:linear-gradient(#a5a4a5 0 2px,#8f8e90 3px,#515153 49%,#1e1f21 51%);color:#fff;line-height:28px;align-items:center}
  button{all:unset}.orb{flex:none;align-self:flex-start;width:88px;height:63px;margin-top:-9px;margin-bottom:-9px;overflow:hidden}
  .grip{flex:none;width:13px;height:42px;margin:0 11px 0 13px;background:radial-gradient(circle at 2px 3px,#b4b4b4 0 1px,#222 2px,transparent 2px) 0 0/5px 7px}
  .list{flex:none;width:226px}.list button{box-sizing:border-box;display:flex;align-items:center;justify-content:center;width:59px;height:50px;border:2px solid #0a0a0a;border-radius:7px;background:linear-gradient(#404042,#0e0e0f);box-shadow:0 0 0 1px #6f6f70}
  .list app-icon{width:25px;height:31px}
  .sc{flex:none;width:26px;align-self:stretch;display:flex;flex-direction:column;justify-content:space-around;align-items:center;background:#15161f}
  .addr{flex:1;min-width:0;display:flex;align-items:center;gap:7px;margin-left:-2px}
  .field{flex:1;display:flex;box-sizing:border-box;height:43px;border:2px solid #8e8d8f;background:#fff;color:#000}
  input{flex:1;min-width:0;border:0;outline:0;font:inherit;background:none}.field span{display:flex;align-items:center;padding:0 10px}
  .go{box-sizing:border-box;width:40px;border-left:2px solid #555;display:flex;align-items:center;justify-content:center}.go app-icon{width:22px;height:28px}
  .ch{margin:-16px 0 0 12px;font-size:26px}.pen{margin:0 14px 0 11px}
  .tray{display:flex;gap:3px;margin-left:39px}.tray app-icon{height:31px}.tray.t2{margin-left:19px}
  time{margin:0 19px 0 9px}a{color:inherit;text-decoration:none}</style>
  <button type="button" class="orb" aria-label="Start"><svg width="88" height="63" viewBox="0 0 88 63"><defs><radialGradient id="o" cx=".5" cy=".85" r=".8"><stop offset="0" stop-color="#27d0f8"/><stop offset=".45" stop-color="#1170b4"/><stop offset="1" stop-color="#0b2a4c"/></radialGradient><linearGradient id="s" x2="0" y2="1"><stop offset="0" stop-color="#dbe6ef"/><stop offset="1" stop-color="#6d97b8" stop-opacity=".4"/></linearGradient></defs><ellipse cx="44" cy="37" rx="33" ry="37" fill="#0c2138" stroke="#8695a4"/><ellipse cx="44" cy="37" rx="31" ry="35" fill="url(#o)"/><path d="M13 34C14-10 74-10 75 34c-20-6-42-6-62 0z" fill="url(#s)"/><path d="M31 16c6-3 10-3 15 0l-3 17c-5-3-10-3-14-1z" fill="#e8541e"/><path d="M49 17c5 3 10 3 16 0l-3 17c-5 3-10 3-16 0z" fill="#7cbc34"/><path d="M28 36c5-3 10-2 14 1l-3 16c-4-3-9-3-14-1z" fill="#3aa0e6"/><path d="M45 38c5 3 10 3 16 0l-3 17c-5 3-11 3-16 0z" fill="#fcc828"/></svg></button>
  <div class="grip"></div><div class="list"><button type="button" aria-label="Microsoft Project"><app-icon name="app"></app-icon></button></div>
  <div class="sc"><svg width="12" height="9"><path d="M6 0l6 9H0z" fill="#b9b9bb"/></svg><svg width="12" height="9"><path d="M0 0h12L6 9z" fill="#b9b9bb"/></svg></div>
  <div class="grip"></div>
  <div class="addr"><label for="a">Address</label><div class="field"><input id="a" type="text"><span>${DOWN}</span><button type="button" class="go" aria-label="Go"><app-icon name="go"></app-icon></button></div></div>
  <div class="grip"></div><a href="#">Links</a><span class="ch">»</span>
  <div class="grip"></div><app-icon class="pen" name="pen"></app-icon>
  <div class="grip"></div><a href="#">Desktop</a><span class="ch">»</span>
  <div class="tray">${tray.map(n=>`<app-icon name="${n}"></app-icon>`).join('')}</div>
  <div class="tray t2"><app-icon name="plug"></app-icon><app-icon name="lan"></app-icon><app-icon name="sound"></app-icon></div>
  <time>10:14 AM</time>`}});

const T=(...n)=>n.map(x=>x=='|'?'<tool-separator></tool-separator>':`<tool-button icon="${x}" label="${x}"></tool-button>`).join('');
define('project-window',class extends Base{view(){
  return `<style>:host{display:flex;flex-direction:column;height:100vh;background:#f3f1f4}
  .chrome{background:linear-gradient(90deg,#a6c1f8,#bcd4f9 45%,#c8dbf7 70%,#c6d9f7)}
  .row{display:flex;gap:6px;padding-left:2px}.row+.row{margin-top:4px}
  .group{width:203px;margin:0 1px 0 4px}.font{width:224px;margin-left:2px}.size{width:68px;margin-left:4px}
  .two tool-button{margin-top:2px;margin-bottom:2px}.serif{font:700 26px "Liberation Serif",serif}
  .entry{background:#a4c0f7;padding:6px 1px 5px 242px}
  .entry input{display:block;box-sizing:border-box;width:100%;height:31px;border:0;background:#fff;font:inherit;outline:0}
  .rule{height:4px;background:linear-gradient(#98b2c4,#8fabbb 50%,#c5dde2)}</style>
  <title-bar></title-bar>
  <div class="chrome"><menu-bar></menu-bar>
  <div class="row"><tool-bar>${T('new','open','save','find','|','print','preview','abc','|','cut','copy','paste','brush','|','undo','|','globelink','|','link','unlink','split','|','info','note','people','|','clip','|')}<combo-box class="group" label="Group by" value="No Group"></combo-box>${T('|','zoomin','zoomout','goto','|','camera','net','help','find','|','clip')}</tool-bar>
  <tool-bar grow>${T('left','right','minus')}<tool-button text menu><span><u>S</u>how</span></tool-button><tool-separator></tool-separator><combo-box class="font" label="Font" value="Arial"></combo-box><combo-box class="size" label="Font size" value="8"></combo-box><tool-separator></tool-separator><tool-button class="serif">B</tool-button><tool-button class="serif"><i>I</i></tool-button><tool-button class="serif"><u>U</u></tool-button></tool-bar></div>
  <div class="row two"><tool-bar><tool-button text pressed>Tasks</tool-button><tool-button text>Resources</tool-button><tool-button text>Track</tool-button><tool-button text>Report</tool-button>${T('|','guide','|')}<tool-button text menu>Next Steps and Related Activities</tool-button></tool-bar></div>
  <div class="entry"><input type="text" aria-label="Entry bar"></div></div><div class="rule"></div>
  <task-sheet></task-sheet><status-bar></status-bar><task-bar></task-bar>`}});
</script>
</body>
</html>
